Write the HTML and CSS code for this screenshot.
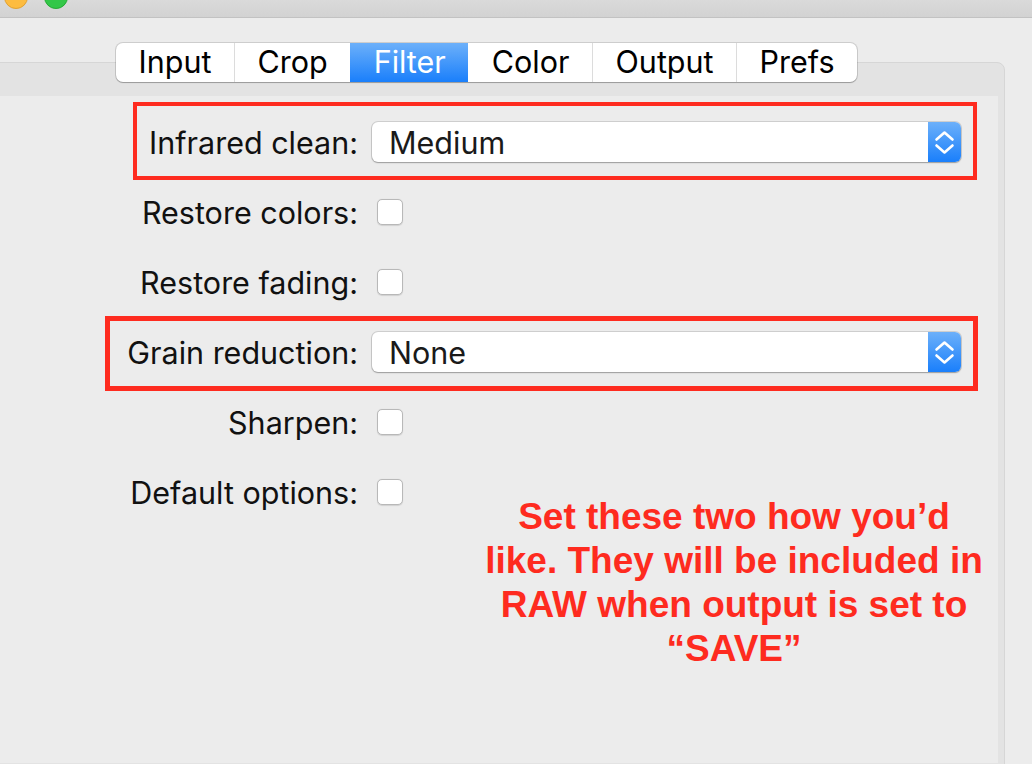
FILE: index.html
```html
<!DOCTYPE html>
<html lang="en">
<head>
<meta charset="utf-8">
<title>Filter</title>
<link rel="stylesheet" href="styles.css">
</head>
<body>
<div class="titlebar">
  <span class="light yellow"></span>
  <span class="light green"></span>
</div>
<div class="main">
  <div class="tabs">
    <div class="tab">Input</div>
    <div class="tab">Crop</div>
    <div class="tab active">Filter</div>
    <div class="tab">Color</div>
    <div class="tab">Output</div>
    <div class="tab">Prefs</div>
  </div>
  <div class="panel">
    <div class="content">
      <div class="form">
        <div class="label">Infrared clean:</div>
        <div class="control">
          <div class="popup"><span class="popup-text">Medium</span><span class="stepper"><svg width="33" height="40" viewBox="0 0 33 40"><path d="M8.5 17.5 L16.5 10.5 L24.5 17.5 M8.5 23.5 L16.5 30.5 L24.5 23.5" fill="none" stroke="#fff" stroke-width="2.6" stroke-linecap="round" stroke-linejoin="round"/></svg></span></div>
        </div>
        <div class="label">Restore colors:</div>
        <div class="control"><span class="checkbox"></span></div>
        <div class="label">Restore fading:</div>
        <div class="control"><span class="checkbox"></span></div>
        <div class="label">Grain reduction:</div>
        <div class="control">
          <div class="popup"><span class="popup-text">None</span><span class="stepper"><svg width="33" height="40" viewBox="0 0 33 40"><path d="M8.5 17.5 L16.5 10.5 L24.5 17.5 M8.5 23.5 L16.5 30.5 L24.5 23.5" fill="none" stroke="#fff" stroke-width="2.6" stroke-linecap="round" stroke-linejoin="round"/></svg></span></div>
        </div>
        <div class="label">Sharpen:</div>
        <div class="control"><span class="checkbox"></span></div>
        <div class="label">Default options:</div>
        <div class="control"><span class="checkbox"></span></div>
      </div>
      <div class="mark mark-one"></div>
      <div class="mark mark-two"></div>
      <div class="note">Set these two how you’d<br>like. They will be included in<br>RAW when output is set to<br>“SAVE”</div>
    </div>
  </div>
</div>
</body>
</html>
```

FILE: styles.css
```css
html, body {
  margin: 0;
  padding: 0;
}
body {
  width: 1032px;
  height: 764px;
  overflow: hidden;
  background: #ececec;
  font-family: Inter, "Open Sans", sans-serif;
  color: #111;
}
.titlebar {
  height: 17px;
  background: linear-gradient(#dadada, #d2d2d2);
  border-bottom: 1px solid #c2c2c2;
  display: flex;
  gap: 16px;
  padding-left: 4px;
  overflow: hidden;
}
.light {
  width: 24px;
  height: 24px;
  border-radius: 50%;
  margin-top: -15px;
  box-sizing: border-box;
  flex: none;
}
.yellow {
  background: #fdbc40;
  border: 1px solid #e0a235;
}
.green {
  background: #33c748;
  border: 1px solid #27aa35;
}
.main {
  padding-top: 25px;
}
.tabs {
  position: relative;
  z-index: 1;
  display: flex;
  margin-left: 116px;
  width: max-content;
  height: 39px;
  margin-bottom: -20px;
  background: #fff;
  border-radius: 7px;
  box-shadow: 0 0 0 1px rgba(0,0,0,0.13), 0 1px 1px rgba(0,0,0,0.22);
  overflow: hidden;
}
.tab {
  display: flex;
  align-items: center;
  justify-content: center;
  font-size: 30.5px;
  padding: 0 22.5px 3px;
  border-left: 1.5px solid #dcdcdc;
  color: #000;
}
.tab:first-child {
  border-left: none;
}
.tab.active {
  background: linear-gradient(#6cb0fa, #1a7ffb);
  color: #fff;
  border-left-color: transparent;
}
.tab.active + .tab {
  border-left-color: transparent;
}
.panel {
  margin-left: -10px;
  width: 1007px;
  height: 700px;
  background: #e3e3e3;
  border: 1px solid #d6d6d6;
  border-radius: 8px;
  padding-top: 33px;
  padding-right: 6px;
}
.content {
  position: relative;
  background: #ececec;
  height: 667px;
}
.form {
  display: grid;
  grid-template-columns: 367px 589px;
  grid-auto-rows: 70px;
  column-gap: 14px;
  padding-top: 11px;
}
.label {
  display: flex;
  align-items: center;
  justify-content: flex-end;
  font-size: 30.5px;
  color: #111;
}
.control {
  display: flex;
  align-items: center;
}
.popup {
  display: flex;
  width: 589px;
  height: 40px;
  background: #fff;
  border-radius: 6px;
  box-shadow: 0 0 0 1px rgba(0,0,0,0.12), 0 1px 1.5px rgba(0,0,0,0.25);
  overflow: hidden;
}
.popup-text {
  flex: 1;
  display: flex;
  align-items: center;
  padding-left: 17px;
  font-size: 30.5px;
  color: #1a1a1a;
}
.stepper {
  width: 33px;
  height: 40px;
  background: linear-gradient(#6cb0fa, #1a7ffb);
  flex: none;
}
.stepper svg {
  display: block;
}
.checkbox {
  margin-left: 5px;
  width: 26px;
  height: 26px;
  box-sizing: border-box;
  background: #fff;
  border: 1px solid #b8b8b8;
  border-radius: 5px;
  box-shadow: 0 0.5px 1px rgba(0,0,0,0.12);
}
.mark {
  position: absolute;
  box-sizing: border-box;
  border: 4px solid #fe2b1f;
}
.mark-one {
  left: 142px;
  top: 6px;
  width: 844px;
  height: 78px;
}
.mark-two {
  left: 114px;
  top: 220px;
  width: 873px;
  height: 75px;
  border-width: 5px;
}
.note {
  position: absolute;
  left: 473px;
  top: 399px;
  width: 540px;
  text-align: center;
  font-family: "Liberation Sans", Arial, sans-serif;
  font-weight: bold;
  font-size: 37px;
  line-height: 44px;
  color: #fe2b1f;
}
```
